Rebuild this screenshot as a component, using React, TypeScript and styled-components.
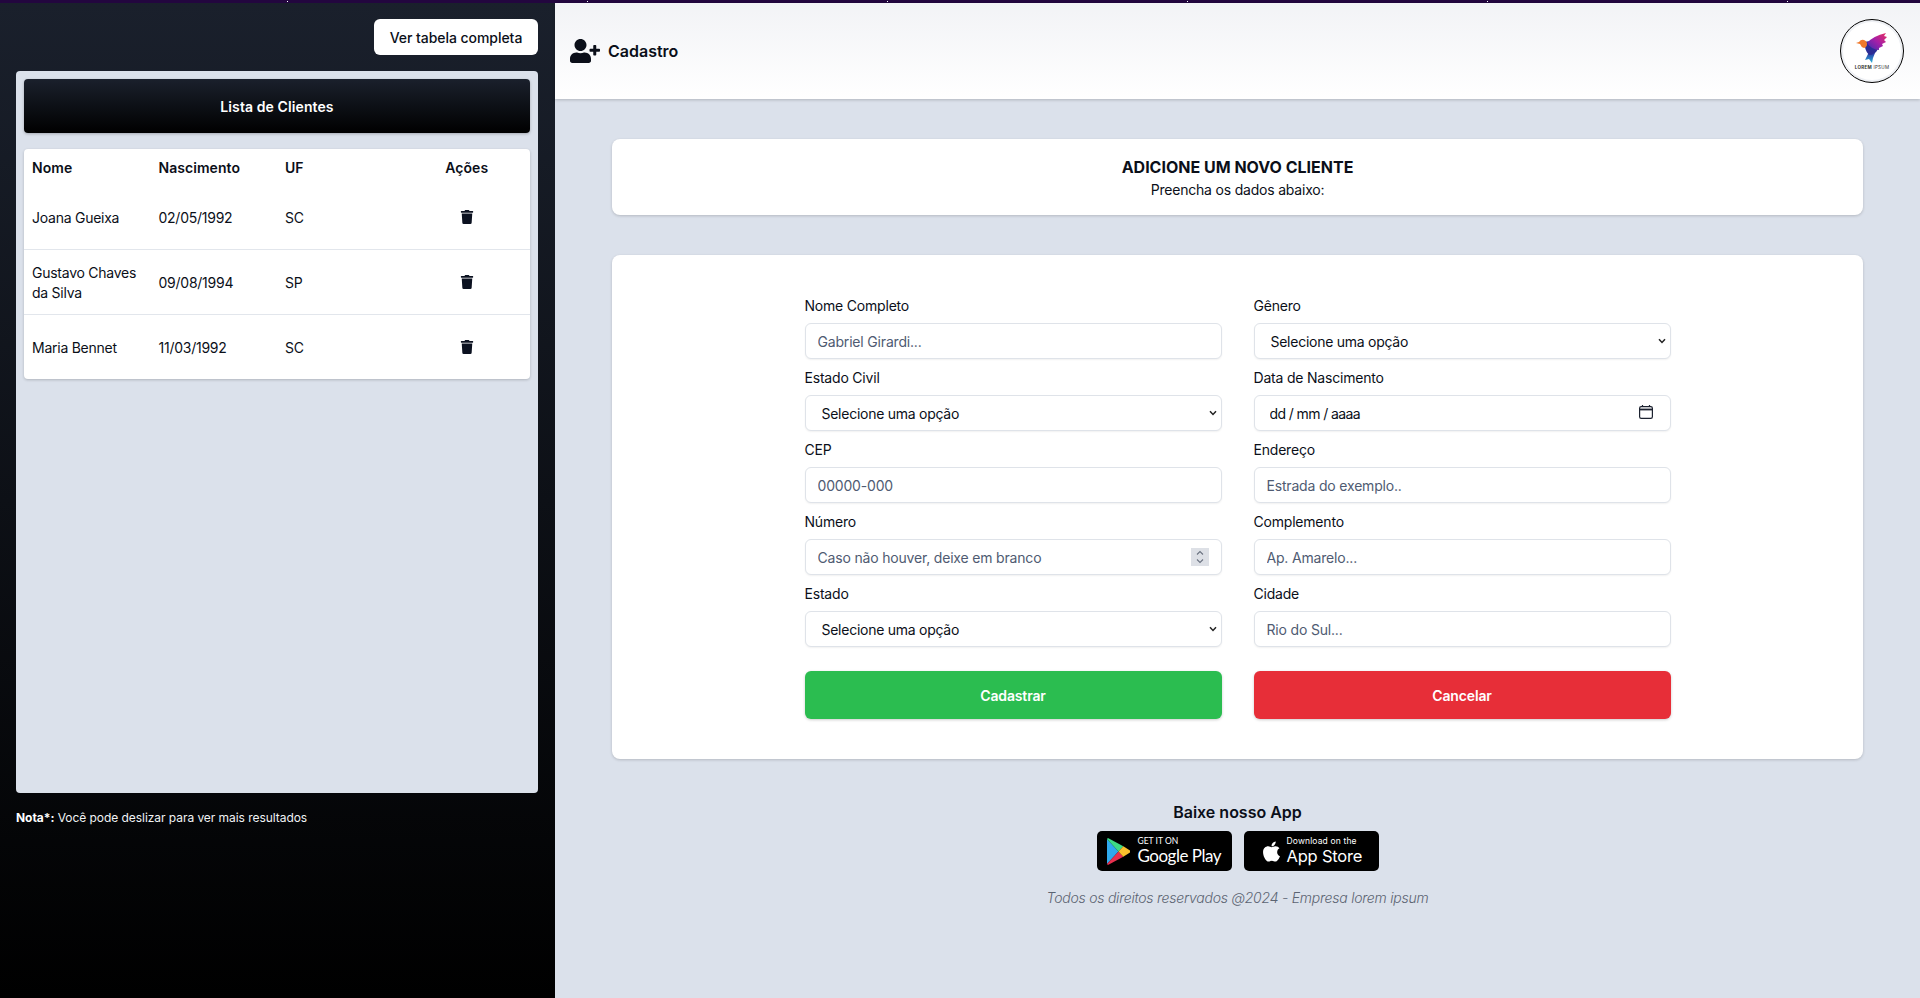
import React from 'react';
import styled, { createGlobalStyle } from 'styled-components';
import { FaTrash, FaUserPlus, FaApple } from 'react-icons/fa';

const GlobalStyle = createGlobalStyle`
  html, body {
    margin: 0;
    padding: 0;
    height: 100%;
    overflow: hidden;
    background: #dbe1eb;
    font-family: Inter, 'Liberation Sans', sans-serif;
    color: #0b0f19;
  }
  * {
    box-sizing: border-box;
  }
`;

const Page = styled.div`
  display: flex;
  flex-direction: column;
  height: 998px;
`;

const TopStrip = styled.div`
  flex: none;
  height: 3px;
  background-color: #23063f;
  background-image: linear-gradient(90deg, #fff 1px, transparent 1px);
  background-size: 300px 1px;
  background-position: 287px 1px;
  background-repeat: repeat-x;
`;

const Columns = styled.div`
  flex: 1;
  display: flex;
  min-height: 0;
`;

const Sidebar = styled.aside`
  flex: none;
  width: 555px;
  padding: 16px 17px 0 16px;
  display: flex;
  flex-direction: column;
  background: linear-gradient(180deg, #1a202c 0%, #000 100%);
`;

const SidebarTop = styled.div`
  display: flex;
  justify-content: flex-end;
  margin-bottom: 16px;
`;

const WhiteButton = styled.button`
  height: 36px;
  width: 164px;
  padding: 2px 0 0;
  border: 0;
  border-radius: 6px;
  background: #fff;
  color: #0b0f19;
  font: 500 14px/20px Inter, sans-serif;
  letter-spacing: -0.05px;
`;

const ListPanel = styled.section`
  height: 722px;
  padding: 8px;
  border-radius: 4px;
  background: #dbe1eb;
`;

const ListHeader = styled.div`
  height: 54px;
  display: flex;
  align-items: center;
  justify-content: center;
  margin-bottom: 16px;
  border-radius: 4px;
  background: linear-gradient(180deg, #1a202c 0%, #000 100%);
  box-shadow: 0 1px 3px rgba(0, 0, 0, 0.25);
  color: #fff;
  font-size: 14px;
  font-weight: 600;
  letter-spacing: 0.1px;
`;

const ClientTable = styled.div`
  border-radius: 4px;
  background: #fff;
  box-shadow: 0 1px 3px rgba(0, 0, 0, 0.2);
`;

const TableRow = styled.div<{ $head?: boolean }>`
  display: grid;
  grid-template-columns: repeat(4, 1fr);
  align-items: center;
  height: ${(p) => (p.$head ? '35px' : '65px')};
  padding-top: ${(p) => (p.$head ? '3px' : '2px')};
  font-size: 14px;
  line-height: 20px;
  font-weight: ${(p) => (p.$head ? 600 : 400)};
  letter-spacing: ${(p) => (p.$head ? '0.05px' : '-0.25px')};
  & + & {
    border-top: 1px solid transparent;
  }
  & + & + & {
    border-top-color: #e2e6ec;
  }
`;

const Cell = styled.div<{ $center?: boolean }>`
  padding: 0 8px;
  text-align: ${(p) => (p.$center ? 'center' : 'left')};
  svg {
    display: block;
    margin: -3px auto 0;
  }
`;

const Note = styled.p`
  margin: 17px 0 0;
  color: #f1f3f5;
  font-size: 12px;
  line-height: 16px;
  letter-spacing: -0.05px;
  b {
    font-weight: 700;
    color: #fff;
  }
`;

const Main = styled.main`
  flex: 1;
  min-width: 0;
  display: flex;
  flex-direction: column;
  background: #dbe1eb;
`;

const MainHeader = styled.header`
  flex: none;
  height: 96px;
  display: flex;
  align-items: center;
  justify-content: space-between;
  padding: 0 16px 0 15px;
  background: linear-gradient(180deg, #f2f3f6 0%, #fff 100%);
  box-shadow: 0 1px 3px rgba(0, 0, 0, 0.2);
`;

const PageTitle = styled.h1`
  display: flex;
  align-items: center;
  gap: 8px;
  margin: 0;
  font-size: 16px;
  line-height: 24px;
  font-weight: 600;
  color: #0b0f19;
`;

const LogoCircle = styled.div`
  width: 64px;
  height: 64px;
  border-radius: 50%;
  border: 1px solid #000;
  box-shadow: inset 0 0 0 2px #eef0f4;
  background: #fff;
  display: flex;
  flex-direction: column;
  align-items: center;
  padding-top: 12px;
`;

const LogoText = styled.span`
  margin-top: 2px;
  font-size: 4.500px;
  line-height: 5px;
  font-weight: 700;
  color: #333;
  letter-spacing: 0.3px;
  white-space: nowrap;
  span {
    font-weight: 400;
  }
`;

const Content = styled.div`
  width: 1251px;
  margin: 40px auto 0;
  display: flex;
  flex-direction: column;
  gap: 40px;
`;

const Card = styled.section`
  border-radius: 8px;
  background: #fff;
  box-shadow: 0 1px 3px rgba(0, 0, 0, 0.18);
`;

const IntroCard = styled(Card)`
  height: 76px;
  display: flex;
  flex-direction: column;
  align-items: center;
  justify-content: center;
`;

const IntroTitle = styled.h2`
  margin: 0;
  font-size: 16px;
  line-height: 24px;
  font-weight: 700;
`;

const IntroText = styled.p`
  margin: 1px 0 0;
  font-size: 14px;
  line-height: 20px;
  letter-spacing: -0.2px;
`;

const FormCard = styled(Card)`
  padding: 40px 0;
  display: flex;
  justify-content: center;
`;

const Form = styled.form`
  width: 866px;
  display: grid;
  grid-template-columns: 1fr 1fr;
  column-gap: 32px;
`;

const Field = styled.div`
  margin-bottom: 8px;
`;

const Label = styled.label`
  display: block;
  padding-top: 1px;
  margin-bottom: 7px;
  font-size: 14px;
  line-height: 20px;
  letter-spacing: -0.2px;
  color: #0b0f19;
`;

const ControlWrap = styled.div`
  position: relative;
`;

const TextInput = styled.input`
  display: block;
  width: 100%;
  height: 36px;
  padding: 0 12px;
  border: 1px solid #dfe3e9;
  border-radius: 6px;
  background: #fff;
  box-shadow: 0 1px 2px rgba(0, 0, 0, 0.06);
  outline: none;
  font: 400 14px/20px Inter, sans-serif;
  letter-spacing: -0.18px;
  color: #0b0f19;
  &::placeholder {
    color: #4f5b72;
    opacity: 1;
  }
`;

const DateInput = styled(TextInput)`
  padding-left: 15px;
  letter-spacing: -0.6px;
`;

const SelectInput = styled.select`
  display: block;
  width: 100%;
  height: 36px;
  padding: 2px 16px 0;
  border: 1px solid #dfe3e9;
  border-radius: 6px;
  background: #fff;
  box-shadow: 0 1px 2px rgba(0, 0, 0, 0.06);
  appearance: none;
  outline: none;
  font: 400 14px/20px Inter, sans-serif;
  letter-spacing: -0.26px;
  color: #0b0f19;
`;

const ChevronIcon = styled.svg`
  position: absolute;
  right: 5px;
  top: 15px;
  width: 8px;
  height: 6px;
  pointer-events: none;
`;

const CalendarIcon = styled.svg`
  position: absolute;
  right: 18px;
  top: 10px;
  width: 14px;
  height: 14px;
`;

const Spinner = styled.svg`
  position: absolute;
  right: 13px;
  top: 9px;
  width: 18px;
  height: 18px;
  background: #dde0e6;
`;

const ActionButton = styled.button<{ $tone: 'green' | 'red' }>`
  height: 48px;
  margin-top: 16px;
  padding: 2px 0 0;
  border: 0;
  border-radius: 6px;
  background: ${(p) => (p.$tone === 'green' ? '#2bbd50' : '#e72e38')};
  box-shadow: 0 1px 3px rgba(0, 0, 0, 0.2);
  color: #fff;
  font: 600 14px/20px Inter, sans-serif;
  letter-spacing: -0.15px;
`;

const Footer = styled.footer`
  margin-top: 41px;
  display: flex;
  flex-direction: column;
  align-items: center;
`;

const FooterTitle = styled.h3`
  margin: 0 0 7px;
  font-size: 16px;
  line-height: 24px;
  font-weight: 600;
`;

const Badges = styled.div`
  display: flex;
  gap: 12px;
  margin-bottom: 17px;
`;

const Badge = styled.div`
  width: 135px;
  height: 40px;
  border-radius: 5px;
  background: #000;
  color: #fff;
  display: flex;
  align-items: center;
  svg {
    flex: none;
  }
`;

const GoogleBadge = styled(Badge)`
  padding-left: 10px;
  gap: 8px;
`;

const AppleBadge = styled(Badge)`
  padding-left: 16px;
  gap: 4px;
`;

const BadgeText = styled.div`
  display: flex;
  flex-direction: column;
  white-space: nowrap;
`;

const BadgeSmall = styled.span<{ $wide?: boolean }>`
  font-size: 8.500px;
  line-height: 9px;
  letter-spacing: ${(p) => (p.$wide ? '0.15px' : '0')};
  font-family: ${(p) => (p.$wide ? 'Inter' : 'Lato')}, sans-serif;
`;

const BadgeBig = styled.span<{ $apple?: boolean }>`
  font-size: ${(p) => (p.$apple ? '16.500px' : '17px')};
  line-height: 20px;
  letter-spacing: ${(p) => (p.$apple ? '-0.2px' : '-0.5px')};
  font-family: ${(p) => (p.$apple ? 'Inter' : 'Lato')}, sans-serif;
`;

const Copyright = styled.p`
  margin: 0;
  font-size: 14px;
  line-height: 20px;
  letter-spacing: -0.24px;
  font-style: italic;
  font-weight: 300;
  color: #5b6472;
`;

const clients = [
  { name: 'Joana Gueixa', birth: '02/05/1992', uf: 'SC' },
  { name: 'Gustavo Chaves da Silva', birth: '09/08/1994', uf: 'SP' },
  { name: 'Maria Bennet', birth: '11/03/1992', uf: 'SC' },
];

const Chevron = () => (
  <ChevronIcon viewBox="0 0 8 6" fill="none" stroke="#222" strokeWidth="1.5">
    <path d="M1 1.2 4 4.4 7 1.2" />
  </ChevronIcon>
);

const SelectField = ({ label }: { label: string }) => (
  <Field>
    <Label>{label}</Label>
    <ControlWrap>
      <SelectInput defaultValue="">
        <option value="">Selecione uma opção</option>
      </SelectInput>
      <Chevron />
    </ControlWrap>
  </Field>
);

const InputField = ({ label, placeholder }: { label: string; placeholder: string }) => (
  <Field>
    <Label>{label}</Label>
    <TextInput placeholder={placeholder} />
  </Field>
);

const BirdLogo = () => (
  <svg width="32" height="31" viewBox="0 0 32 31">
    <defs>
      <linearGradient id="wing" x1="0" y1="1" x2="1" y2="0">
        <stop offset="0" stopColor="#3a2fb0" />
        <stop offset="0.5" stopColor="#a51fa8" />
        <stop offset="1" stopColor="#e8305f" />
      </linearGradient>
      <linearGradient id="tail" x1="0" y1="0" x2="0" y2="1">
        <stop offset="0" stopColor="#2a3aa8" />
        <stop offset="1" stopColor="#2bb3d8" />
      </linearGradient>
    </defs>
    <path d="M12 22 L19 21 L17 26 L16 31 L13 27 L9 28 Z" fill="url(#tail)" />
    <path d="M9 10 Q15 8 18 12 L22 17 Q19 23 13 23 Q8 18 9 10 Z" fill="#2b2c95" />
    <path d="M11 11 Q17 4 30 1 L28 4 L31 5 L28 8 L30 10 L26 12 L27 14 L23 16 L23 18 Q16 18 11 11 Z" fill="url(#wing)" />
    <path d="M0 11 L3 10 Q5 7 8 8 Q11 9 11 12 Q11 15 8 16 Q5 15 4 12 Z" fill="#f0792b" />
  </svg>
);

const PlayIcon = () => (
  <svg width="23" height="27" viewBox="0 0 24 26" preserveAspectRatio="none">
    <path d="M0 1 V25 L12 13 Z" fill="#2fa9ee" />
    <path d="M0 1 L12 13 L17 8 L1 0 Z" fill="#3ddb85" />
    <path d="M0 25 L12 13 L17 18 L1 26 Z" fill="#e8304f" />
    <path d="M17 8 L24 12 Q24.500 13 24 14 L17 18 L12 13 Z" fill="#fbc02d" />
  </svg>
);

export default function App() {
  return (
    <>
      <GlobalStyle />
      <Page>
        <TopStrip />
        <Columns>
          <Sidebar>
            <SidebarTop>
              <WhiteButton>Ver tabela completa</WhiteButton>
            </SidebarTop>
            <ListPanel>
              <ListHeader>Lista de Clientes</ListHeader>
              <ClientTable>
                <TableRow $head>
                  <Cell>Nome</Cell>
                  <Cell>Nascimento</Cell>
                  <Cell>UF</Cell>
                  <Cell $center>Ações</Cell>
                </TableRow>
                {clients.map((c) => (
                  <TableRow key={c.name}>
                    <Cell>{c.name}</Cell>
                    <Cell>{c.birth}</Cell>
                    <Cell>{c.uf}</Cell>
                    <Cell $center>
                      <FaTrash size={14} color="#0b1120" />
                    </Cell>
                  </TableRow>
                ))}
              </ClientTable>
            </ListPanel>
            <Note>
              <b>Nota*:</b> Você pode deslizar para ver mais resultados
            </Note>
          </Sidebar>
          <Main>
            <MainHeader>
              <PageTitle>
                <FaUserPlus size={30} />
                Cadastro
              </PageTitle>
              <LogoCircle>
                <BirdLogo />
                <LogoText>
                  LOREM <span>IPSUM</span>
                </LogoText>
              </LogoCircle>
            </MainHeader>
            <Content>
              <IntroCard>
                <IntroTitle>ADICIONE UM NOVO CLIENTE</IntroTitle>
                <IntroText>Preencha os dados abaixo:</IntroText>
              </IntroCard>
              <FormCard>
                <Form>
                  <InputField label="Nome Completo" placeholder="Gabriel Girardi..." />
                  <SelectField label="Gênero" />
                  <SelectField label="Estado Civil" />
                  <Field>
                    <Label>Data de Nascimento</Label>
                    <ControlWrap>
                      <DateInput defaultValue="dd / mm / aaaa" readOnly />
                      <CalendarIcon viewBox="0 0 14 14" fill="none" stroke="#1c2230" strokeWidth="1.2">
                        <rect x="0.6" y="1.6" width="12.8" height="11.8" rx="1.6" />
                        <path d="M0.6 4.500H13.400" strokeWidth="1.800" />
                        <path d="M3.500 0V2M10.500 0V2" />
                      </CalendarIcon>
                    </ControlWrap>
                  </Field>
                  <InputField label="CEP" placeholder="00000-000" />
                  <InputField label="Endereço" placeholder="Estrada do exemplo.." />
                  <Field>
                    <Label>Número</Label>
                    <ControlWrap>
                      <TextInput placeholder="Caso não houver, deixe em branco" />
                      <Spinner viewBox="0 0 18 18" fill="none" stroke="#6b7280" strokeWidth="1.1">
                        <path d="M6 6.500 9 3.500 12 6.500M6 11.500 9 14.500 12 11.500" />
                      </Spinner>
                    </ControlWrap>
                  </Field>
                  <InputField label="Complemento" placeholder="Ap. Amarelo..." />
                  <SelectField label="Estado" />
                  <InputField label="Cidade" placeholder="Rio do Sul..." />
                  <ActionButton type="button" $tone="green">Cadastrar</ActionButton>
                  <ActionButton type="button" $tone="red">Cancelar</ActionButton>
                </Form>
              </FormCard>
            </Content>
            <Footer>
              <FooterTitle>Baixe nosso App</FooterTitle>
              <Badges>
                <GoogleBadge>
                  <PlayIcon />
                  <BadgeText>
                    <BadgeSmall>GET IT ON</BadgeSmall>
                    <BadgeBig>Google Play</BadgeBig>
                  </BadgeText>
                </GoogleBadge>
                <AppleBadge>
                  <FaApple size={23} />
                  <BadgeText>
                    <BadgeSmall $wide>Download on the</BadgeSmall>
                    <BadgeBig $apple>App Store</BadgeBig>
                  </BadgeText>
                </AppleBadge>
              </Badges>
              <Copyright>Todos os direitos reservados @2024 - Empresa lorem ipsum</Copyright>
            </Footer>
          </Main>
        </Columns>
      </Page>
    </>
  );
}
